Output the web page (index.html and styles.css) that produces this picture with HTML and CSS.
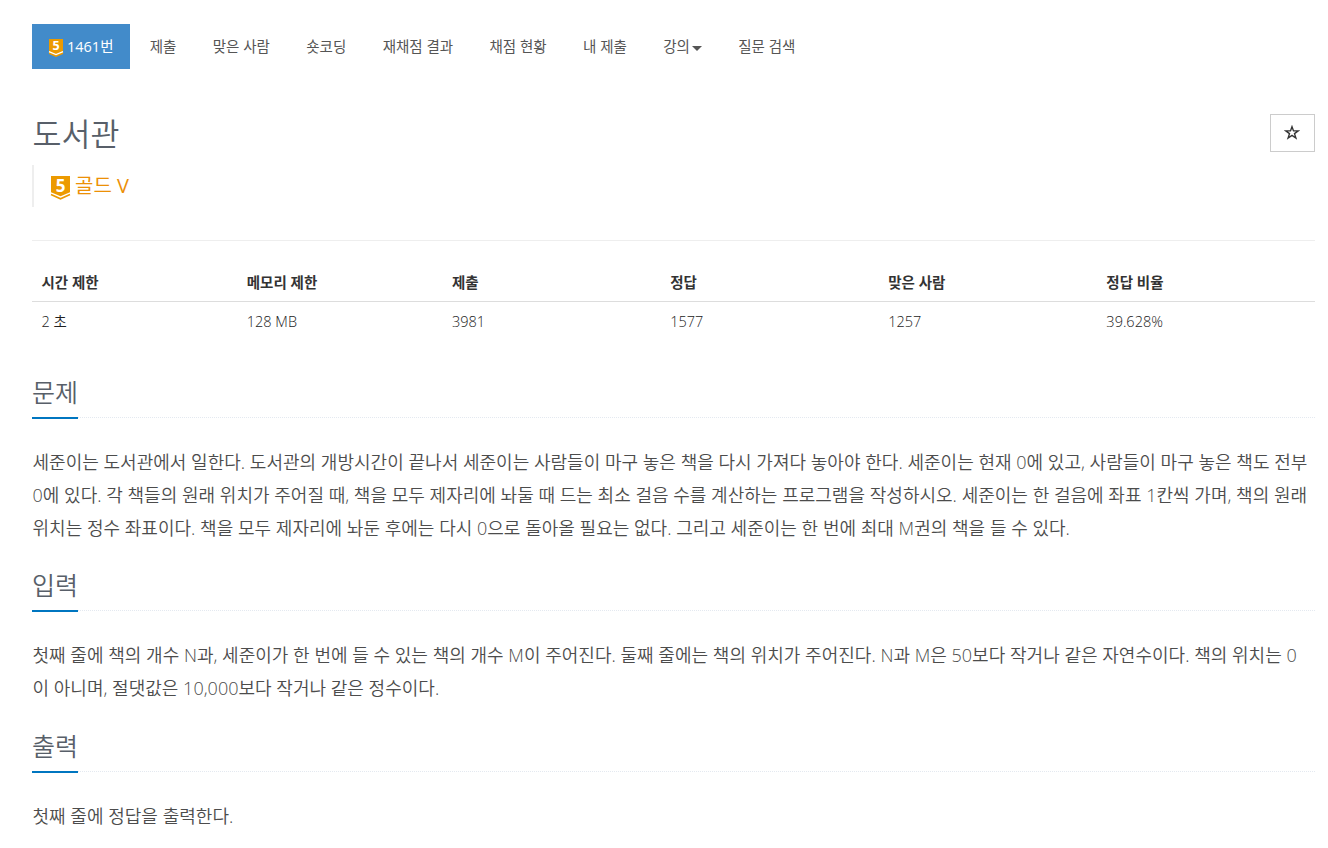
FILE: index.html
```html
<!DOCTYPE html>
<html lang="ko">
<head>
    <meta charset="UTF-8">
    <meta name="viewport" content="width=device-width, initial-scale=1.0">
    <title>1461번: 도서관</title>
    <link rel="stylesheet" href="styles.css">
</head>
<body>
    <div class="container">
        <ul class="problem-menu">
            <li class="active"><a href="#"><svg class="tier-small" viewBox="0 0 14 18">
                <path fill="#ec9a00" d="M0 0h14v15l-7 3-7-3z"/>
                <path fill="none" stroke="#fff" stroke-width="1.2" d="M0 12.6l7 3 7-3"/>
                <text x="7" y="11.2" text-anchor="middle" fill="#fff">5</text>
            </svg>1461번</a></li>
            <li><a href="#">제출</a></li>
            <li><a href="#">맞은 사람</a></li>
            <li><a href="#">숏코딩</a></li>
            <li><a href="#">재채점 결과</a></li>
            <li><a href="#">채점 현황</a></li>
            <li><a href="#">내 제출</a></li>
            <li><a href="#">강의<b class="caret"></b></a></li>
            <li><a href="#">질문 검색</a></li>
        </ul>

        <div class="page-header">
            <div>
                <h1>도서관</h1>
                <blockquote>
                    <svg class="tier" viewBox="0 0 19 24">
                        <path fill="#ec9a00" d="M0 0h19v16.2l-9.5 4-9.5-4z"/>
                        <path fill="none" stroke="#ec9a00" stroke-width="1.6" d="M0 18.6l9.5 4.2 9.5-4.2"/>
                        <text x="9.5" y="15.8" text-anchor="middle" fill="#fff">5</text>
                    </svg>
                    <span>골드 V</span>
                </blockquote>
            </div>
            <button class="favorite" aria-label="즐겨찾기">
                <svg viewBox="0 0 16 15"><path d="M8 1.7l1.5 4.2h4.8l-3.8 2.7 1.4 4.4L8 10.4 4.1 13l1.4-4.4-3.8-2.7h4.8z"/></svg>
            </button>
        </div>

        <table>
            <thead>
                <tr>
                    <th class="narrow">시간 제한</th>
                    <th class="narrow">메모리 제한</th>
                    <th>제출</th>
                    <th>정답</th>
                    <th>맞은 사람</th>
                    <th>정답 비율</th>
                </tr>
            </thead>
            <tbody>
                <tr>
                    <td>2 초</td>
                    <td>128 MB</td>
                    <td>3981</td>
                    <td>1577</td>
                    <td>1257</td>
                    <td>39.628%</td>
                </tr>
            </tbody>
        </table>

        <section>
            <div class="headline"><h2>문제</h2></div>
            <p>세준이는 도서관에서 일한다. 도서관의 개방시간이 끝나서 세준이는 사람들이 마구 놓은 책을 다시 가져다 놓아야 한다. 세준이는 현재 0에 있고, 사람들이 마구 놓은 책도 전부 0에 있다. 각 책들의 원래 위치가 주어질 때, 책을 모두 제자리에 놔둘 때 드는 최소 걸음 수를 계산하는 프로그램을 작성하시오. 세준이는 한 걸음에 좌표 1칸씩 가며, 책의 원래 위치는 정수 좌표이다. 책을 모두 제자리에 놔둔 후에는 다시 0으로 돌아올 필요는 없다. 그리고 세준이는 한 번에 최대 M권의 책을 들 수 있다.</p>
        </section>

        <section>
            <div class="headline"><h2>입력</h2></div>
            <p>첫째 줄에 책의 개수 N과, 세준이가 한 번에 들 수 있는 책의 개수 M이 주어진다. 둘째 줄에는 책의 위치가 주어진다. N과 M은 50보다 작거나 같은 자연수이다. 책의 위치는 0<wbr>이 아니며, 절댓값은 10,000보다 작거나 같은 정수이다.</p>
        </section>

        <section class="output">
            <div class="headline"><h2>출력</h2></div>
            <p>첫째 줄에 정답을 출력한다.</p>
        </section>
    </div>
</body>
</html>
```
FILE: styles.css
```css
* {
    box-sizing: border-box;
}

body {
    margin: 0;
    background: #fff;
    color: #333;
    font-family: "Open Sans", "Noto Sans CJK KR", sans-serif;
    font-size: 14.5px;
    line-height: 20px;
}

.container {
    padding: 24px 13px 0 32px;
}

.problem-menu {
    display: flex;
    gap: 3px;
    height: 45px;
    margin: 0;
    padding: 0;
    list-style: none;
}

.problem-menu a {
    display: flex;
    align-items: center;
    height: 45px;
    padding: 0 16.7px;
    color: #555;
    font-size: 14.5px;
    line-height: 18px;
    text-decoration: none;
}

.problem-menu .active a {
    width: 98px;
    padding: 0 0 0 17px;
    background: #428bca;
    color: #fff;
}

.tier-small {
    width: 14px;
    height: 18px;
    margin: 3px 4px 0 0;
    overflow: visible;
}

svg text {
    font-family: "Open Sans", sans-serif;
    font-weight: 700;
    font-size: 17px;
}

.tier-small text {
    font-size: 12.5px;
}

.caret {
    margin: 3px 0 0 2px;
    border-top: 5px solid #555;
    border-right: 5px solid transparent;
    border-left: 5px solid transparent;
}

.page-header {
    display: flex;
    justify-content: space-between;
    height: 172px;
    padding-top: 45px;
    border-bottom: 1px solid #eee;
}

h1 {
    margin: 0;
    padding-left: 0.5px;
    color: #585f69;
    font-size: 31.5px;
    font-weight: 350;
    line-height: 40px;
}

blockquote {
    display: flex;
    align-items: center;
    gap: 5px;
    height: 42px;
    margin: 11px 0 0;
    padding-left: 17px;
    border-left: 2px solid #eee;
    color: #ec9006;
    font-size: 20px;
    font-weight: 400;
}

.tier {
    width: 19px;
    height: 24px;
    margin-top: 3px;
    overflow: visible;
}

.favorite {
    display: flex;
    align-items: center;
    justify-content: center;
    width: 45px;
    height: 38px;
    padding: 0 1px 2px 0;
    border: 1px solid #ccc;
    background: #fff;
}

.favorite svg {
    width: 16px;
    height: 15px;
    fill: none;
    stroke: #333;
    stroke-width: 1.4;
}

table {
    width: 100%;
    margin-top: 22px;
    border-collapse: collapse;
    table-layout: fixed;
}

th, td {
    height: 39px;
    padding: 2px 9px 0 9.5px;
    text-align: left;
    font-weight: 350;
}

td {
    color: #222;
}

th {
    width: 17%;
    height: 38px;
    border-bottom: 1px solid #ddd;
    font-weight: 700;
}

.narrow {
    width: 16%;
}

.headline {
    display: flex;
    height: 48px;
    border-bottom: 1px dotted #e4e9f0;
}

h2 {
    height: 49px;
    margin: 0;
    border-bottom: 2px solid #0076c0;
    color: #585f69;
    font-size: 25px;
    font-weight: 350;
    line-height: 44px;
}

section {
    padding-top: 30px;
}

section + section {
    padding-top: 18px;
}

section.output {
    padding-top: 19px;
}

p {
    margin: 28px 0 0;
    padding: 0 4px 0 0.5px;
    color: #4c4c4c;
    font-size: 18px;
    font-weight: 350;
    line-height: 33px;
    letter-spacing: 0.02px;
}
```
